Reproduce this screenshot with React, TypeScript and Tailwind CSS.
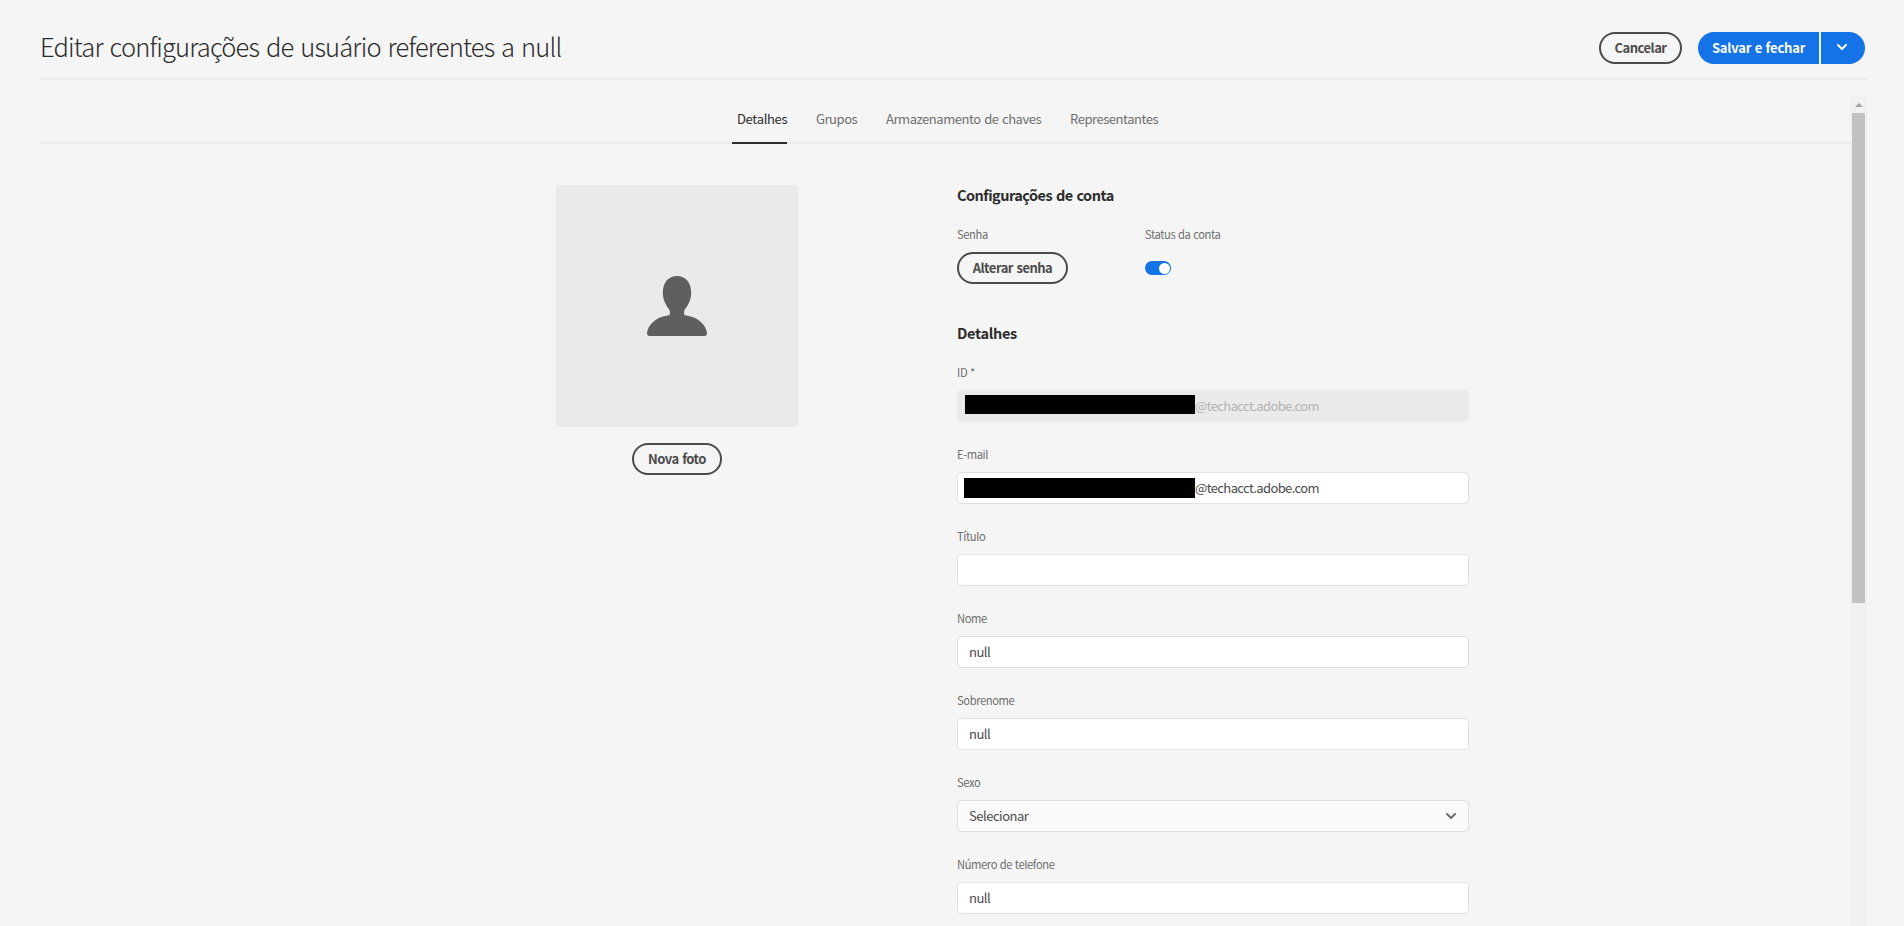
import React from 'react';

function Chevron({ className }: { className: string }) {
  return (
    <svg width="10" height="6" viewBox="0 0 10 6" className={className}>
      <path
        d="M9.99 1.01A1 1 0 0 0 8.28.3L5 3.58 1.72.3A1 1 0 0 0 .3 1.72l3.99 3.99a1 1 0 0 0 1.42 0L9.7 1.72a1 1 0 0 0 .29-.71z"
        fill="currentColor"
      />
    </svg>
  );
}

function OutlineButton({ children, className }: { children: React.ReactNode; className: string }) {
  return (
    <button
      className={`flex h-8 items-center justify-center rounded-full border-2 border-[#4b4b4b] text-[13px] leading-5 font-bold tracking-[-0.5px] [word-spacing:1px] whitespace-nowrap text-[#4b4b4b] ${className}`}
    >
      {children}
    </button>
  );
}

function Label({ children }: { children: React.ReactNode }) {
  return (
    <div className="h-[26px] text-[11.2px] leading-4 tracking-[-0.4px] [word-spacing:0.6px] whitespace-nowrap text-[#6e6e6e]">
      {children}
    </div>
  );
}

function Field({ label, children, box }: { label: string; children?: React.ReactNode; box: string }) {
  return (
    <div className="h-[82px] shrink-0">
      <Label>{label}</Label>
      <div className={`flex h-8 items-center rounded border text-[13px] leading-5 tracking-[-0.48px] whitespace-nowrap ${box}`}>{children}</div>
    </div>
  );
}

const white = 'border-[#e1e1e1] bg-white pl-[11px] pb-px text-[#4b4b4b]';

export default function App() {
  return (
    <div className="flex h-[926px] w-[1904px] flex-col overflow-hidden bg-[#f5f5f5] pr-[37px] pl-10 font-['Noto_Sans_CJK_SC','Open_Sans',sans-serif]">
      <header className="flex h-20 shrink-0 items-start border-b-2 border-[#eaeaea] pt-8 pr-0.5">
        <h1 className="-mt-1 text-[25.5px] leading-9 font-light tracking-[-0.84px] [word-spacing:2px] whitespace-nowrap text-[#2c2c2c]">
          Editar configurações de usuário referentes a null
        </h1>
        <OutlineButton className="ml-auto w-[83px]">Cancelar</OutlineButton>
        <button className="ml-4 flex h-8 w-[121px] items-center justify-center rounded-l-full bg-[#1473e6] text-[13px] leading-5 font-bold tracking-[-0.2px] [word-spacing:0.8px] whitespace-nowrap text-white">
          Salvar e fechar
        </button>
        <button className="ml-0.5 flex h-8 w-11 items-center justify-center rounded-r-full bg-[#1473e6] pr-0.5 pb-0.5 text-white">
          <Chevron className="" />
        </button>
      </header>

      <div className="mt-4 flex min-h-0 flex-1">
        <div className="flex flex-1 flex-col overflow-hidden">
          <nav className="flex h-12 shrink-0 border-b-2 border-[#eaeaea] pl-[692px] text-[13px] leading-5 tracking-[-0.45px] [word-spacing:1px] whitespace-nowrap text-[#6e6e6e]">
            <div className="h-12 w-[55px] shrink-0 border-b-2 border-[#2c2c2c] pt-[13px] pl-[5px] tracking-[-0.32px] text-[#2c2c2c]">Detalhes</div>
            <div className="mr-[29px] w-[70px] shrink-0 pt-[13px] pl-[29px]">Grupos</div>
            <div className="mr-[29px] w-[155px] shrink-0 pt-[13px]">Armazenamento de chaves</div>
            <div className="pt-[13px]">Representantes</div>
          </nav>

          <div className="flex min-h-0 flex-1 pl-[516px]">
            <section className="flex w-[242px] flex-col items-center pt-[41px]">
              <div className="flex h-[242px] w-full shrink-0 items-center justify-center rounded bg-[#eaeaea]">
                <svg width="60" height="60" viewBox="0 0 60 60">
                  <path
                    d="M38.3 39.3c-.8-.1-1.2-1.200-1.200-2.900 0-1.500.2-2.300.9-3.200 3.400-4.300 6.200-10 6.200-16.200C44.200 6.600 38.800 0 30 0S15.800 6.600 15.800 17c0 6.200 2.800 11.900 6.200 16.200.7.9.9 1.700.9 3.200 0 1.700-.4 2.800-1.200 2.900C8.800 40.800.3 49.500 0 57.500.000 58.900 1.100 60 2.500 60h55c1.400 0 2.500-1.100 2.500-2.500-.3-8-8.800-16.700-21.700-18.200z"
                    fill="#5f5f5f"
                  />
                </svg>
              </div>
              <OutlineButton className="mt-4 w-[90px] shrink-0">Nova foto</OutlineButton>
            </section>

            <section className="ml-[159px] flex w-[512px] flex-col pt-[39px]">
              <h2 className="h-[43px] shrink-0 text-[14.5px] leading-6 font-bold tracking-[-0.52px] [word-spacing:1px] text-[#2c2c2c]">
                Configurações de conta
              </h2>
              <div className="flex h-[95px] shrink-0">
                <div className="w-[188px]">
                  <Label>Senha</Label>
                  <OutlineButton className="w-[111px]">Alterar senha</OutlineButton>
                </div>
                <div>
                  <Label>Status da conta</Label>
                  <div className="mt-[9px] flex h-3.5 w-[26px] items-center justify-end rounded-full bg-[#1473e6] pr-[1.5px]">
                    <div className="size-[11px] rounded-full bg-white" />
                  </div>
                </div>
              </div>
              <h2 className="h-[43px] shrink-0 text-[14.5px] leading-6 font-bold tracking-[-0.3px] text-[#2c2c2c]">Detalhes</h2>

              <Field label="ID *" box="border-[#eaeaea] bg-[#eaeaea] pl-[7px] text-[#b3b3b3]">
                <span className="mb-[3px] h-[19px] w-[230px] bg-black" />
                <span className="pb-px tracking-[-0.62px]">@techacct.adobe.com</span>
              </Field>
              <Field label="E-mail" box="border-[#e1e1e1] bg-white pl-1.5 text-[#4b4b4b]">
                <span className="h-5 w-[231px] bg-black" />
                <span className="pb-px tracking-[-0.62px]">@techacct.adobe.com</span>
              </Field>
              <Field label="Título" box={white} />
              <Field label="Nome" box={white}>null</Field>
              <Field label="Sobrenome" box={white}>null</Field>
              <Field label="Sexo" box="justify-between border-[#e1e1e1] bg-[#fafafa] pl-[11px] pr-3 text-[#4b4b4b]">
                <span>Selecionar</span>
                <Chevron className="text-[#6e6e6e]" />
              </Field>
              <Field label="Número de telefone" box={white}>null</Field>
            </section>
          </div>
        </div>

        <div className="flex w-[17px] flex-col items-center bg-[#f1f1f1]">
          <div className="flex h-[17px] items-center justify-center pt-px">
            <svg width="8" height="4" viewBox="0 0 8 4">
              <path d="M0 4L4 0l4 4z" fill="#a3a3a3" />
            </svg>
          </div>
          <div className="h-[490px] w-[13px] bg-[#c1c1c1]" />
        </div>
      </div>
    </div>
  );
}
